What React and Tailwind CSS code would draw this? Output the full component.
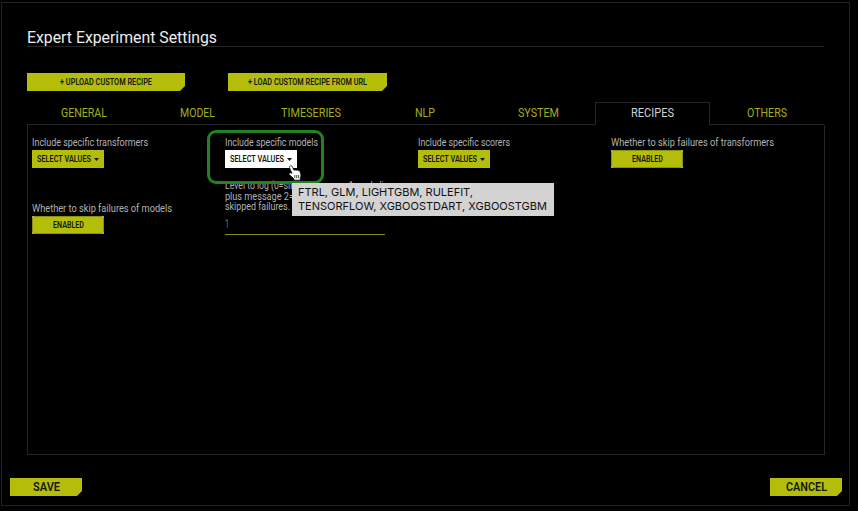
import { useLayoutEffect, useRef } from "react";

// Text squeezed horizontally to a fixed measure.
function Fit({ w, className = "", children }) {
  const ref = useRef(null);
  useLayoutEffect(() => {
    const el = ref.current;
    const apply = () => {
      el.style.transform = "none";
      const natural = el.getBoundingClientRect().width;
      el.style.transform = `scaleX(${w / natural})`;
    };
    apply();
    document.fonts.ready.then(apply);
  }, [w]);
  return (
    <span className={`block shrink-0 ${className}`} style={{ width: w }}>
      <span ref={ref} className="inline-block origin-left whitespace-pre align-top">{children}</span>
    </span>
  );
}

const clip = "[clip-path:polygon(0_0,100%_0,100%_calc(100%_-_5px),calc(100%_-_5px)_100%,0_100%)]";

function CutButton({ w, className, text }) {
  return (
    <button className={`flex h-[18px] items-center justify-center bg-[#b4be0a] text-[#15170a] ${clip} ${className}`}>
      <Fit w={w}>{text}</Fit>
    </button>
  );
}

function Select({ active }) {
  return (
    <button className={`flex h-[18px] w-[72px] items-center pl-[5px] text-[8.5px] font-semibold leading-[17px] text-[#15170a] ${active ? "bg-white" : "bg-[#b4be0a]"}`}>
      <Fit w={54}>SELECT VALUES</Fit>
      <svg className="ml-[3px]" width="5" height="3" viewBox="0 0 5 3">
        <path d="M0 0h5L2.500 3z" fill="#15170a" />
      </svg>
    </button>
  );
}

function Enabled() {
  return (
    <button className="relative flex h-[18px] w-[72px] items-center justify-center bg-[#b4be0a] text-[8.5px] font-semibold leading-[17px] text-[#15170a] outline-1 -outline-offset-1 outline-[#8a9010]">
      <Fit w={31}>ENABLED</Fit>
      <span className="absolute left-0 top-0 size-[2px] bg-[#a5a878]" />
      <span className="absolute right-0 top-0 size-[2px] bg-[#a5a878]" />
      <span className="absolute bottom-0 left-0 size-[2px] bg-[#a5a878]" />
      <span className="absolute bottom-0 right-0 size-[2px] bg-[#a5a878]" />
    </button>
  );
}

function Field({ label, w, children }) {
  return (
    <div className="flex w-[193px] flex-col">
      <Fit w={w} className="h-[15px] text-[10.5px] leading-[15px]">{label}</Fit>
      {children}
    </div>
  );
}

const tabs = [
  ["GENERAL", 46], ["MODEL", 35], ["TIMESERIES", 60], ["NLP", 20],
  ["SYSTEM", 41], ["RECIPES", 43], ["OTHERS", 40],
];

export default function App() {
  return (
    <div className="relative h-[511px] w-[858px] overflow-hidden bg-black pl-px pt-[2px] font-['Roboto',sans-serif] text-[#b2b2b2]">
      <main className="flex h-[504px] w-[849px] flex-col border border-[#222]">
        <header className="ml-[25px] mt-[23px] h-[21px] w-[797px] border-b border-[#262626] text-[17px] leading-[23px] text-[#ededed]">
          <Fit w={190}>Expert Experiment Settings</Fit>
        </header>
        <div className="ml-[25px] mt-[26px] flex gap-[43px] text-[8.5px] font-semibold leading-[17px]">
          <CutButton className="w-[158px]" w={92} text="+ UPLOAD CUSTOM RECIPE" />
          <CutButton className="w-[159px]" w={119} text="+ LOAD CUSTOM RECIPE FROM URL" />
        </div>
        <nav className="ml-[25px] mt-[11px] flex h-[23px] w-[797px] text-[12.5px] leading-[20px]">
          {tabs.map(([name, w]) => (
            <div
              key={name}
              className={`flex flex-1 justify-center ${name === "RECIPES"
                ? "border-x border-t border-[#262626] text-[#d0d0d0]"
                : "border-b border-b-[#262626] pt-px text-[#a4ae18]"}`}
            >
              <Fit w={w}>{name}</Fit>
            </div>
          ))}
        </nav>
        <section className="ml-[25px] h-[330px] w-[798px] overflow-hidden border-x border-b border-[#262626] pl-[4px] pt-[10px]">
          <div className="flex h-[50px]">
            <Field label="Include specific transformers" w={116}><Select /></Field>
            <Field label="Include specific models" w={93}><Select active /></Field>
            <Field label="Include specific scorers" w={92}><Select /></Field>
            <Field label="Whether to skip failures of transformers" w={163}><Enabled /></Field>
          </div>
          <div className="flex">
            <div className="pt-[16px]">
              <Field label="Whether to skip failures of models" w={140}><Enabled /></Field>
            </div>
            <div className="-mt-[4px] flex w-[160px] flex-col text-[10.5px] leading-[10.5px]">
              <Fit w={168}>Level to log (0=simple message 1=code line</Fit>
              <Fit w={170}>plus message 2=detailed stack traces) for</Fit>
              <Fit w={65}>skipped failures.</Fit>
              <div className="mt-[2px] h-[20px] border-b border-[#858c14] text-[12px] leading-[18px] text-[#777]">
                <Fit w={4}>1</Fit>
              </div>
            </div>
          </div>
        </section>
        <footer className="ml-[8px] mt-[23px] flex w-[832px] justify-between text-[12px] font-semibold leading-[18px]">
          <CutButton className="w-[72px]" w={27} text="SAVE" />
          <CutButton className="w-[72px]" w={41} text="CANCEL" />
        </footer>
      </main>

      <div className="absolute left-[207px] top-[130px] h-[54px] w-[117px] rounded-[9px] border-[3px] border-[#21821f]" />
      <div className="absolute left-[292px] top-[183px] h-[33px] w-[262px] bg-[#d3d3d3] pl-[6px] pt-[2px] font-['Inter',sans-serif] text-[11px] leading-[14px] text-[#111]">
        <Fit w={175}>FTRL, GLM, LIGHTGBM, RULEFIT,</Fit>
        <Fit w={249}>TENSORFLOW, XGBOOSTDART, XGBOOSTGBM</Fit>
      </div>
      <svg className="absolute left-[288px] top-[165px]" width="14" height="16" viewBox="0 0 14 16">
        <path
          d="M2 1C2.900.3 4 .7 4.400 1.700L6 5.400C6.500 4.600 7.600 4.700 8 5.400C8.600 4.800 9.700 5 10 5.800C10.800 5.300 11.800 5.700 12 6.600L12.800 9.500C13.100 11 12.500 12.200 12.200 13.400V15.200H6V14C4.800 12.200 2.700 11.300 1.300 9.600C.5 8.300 1.800 7.300 3 7.900L4 8.500L1.500 2.700C1.200 2 1.400 1.400 2 1Z"
          fill="#fff"
          stroke="#000"
          strokeWidth=".7"
        />
        <path d="M6.800 10v3.200M8.700 10v3.200M10.600 10v3.200" stroke="#000" strokeWidth=".7" />
      </svg>
    </div>
  );
}
